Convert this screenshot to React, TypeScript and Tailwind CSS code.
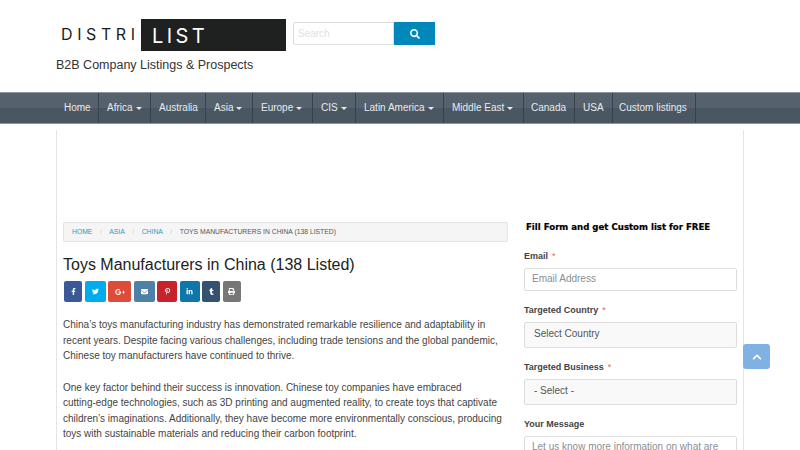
import React from "react";
import {
  FaChevronUp,
  FaEnvelope,
  FaFacebookF,
  FaGooglePlusG,
  FaLinkedinIn,
  FaPinterestP,
  FaPrint,
  FaSearch,
  FaTumblr,
  FaTwitter,
} from "react-icons/fa";

const navItems = [
  { label: "Home", w: "w-[43px] pl-[8px]" },
  { label: "Africa", caret: true, w: "w-[52px] pl-[8px]" },
  { label: "Australia", w: "w-[55px] pl-[8px]" },
  { label: "Asia", caret: true, w: "w-[47px] pl-[8px]" },
  { label: "Europe", caret: true, w: "w-[60px] pl-[8px]" },
  { label: "CIS", caret: true, w: "w-[43px] pl-[8px]" },
  { label: "Latin America", caret: true, w: "w-[88px] pl-[8px]" },
  { label: "Middle East", caret: true, w: "w-[80px] pl-[8px]" },
  { label: "Canada", w: "w-[51px] pl-[7px]" },
  { label: "USA", w: "w-[38px] pl-[8px]" },
  { label: "Custom listings", w: "w-[83px] pl-[6px]" },
];

const shareButtons = [
  { icon: <FaFacebookF />, cls: "w-[18px] bg-[#3b5998]" },
  { icon: <FaTwitter />, cls: "w-[21px] bg-[#00acee]" },
  { icon: <FaGooglePlusG className="text-[10px]" />, cls: "w-[23px] bg-[#dd4b39]" },
  { icon: <FaEnvelope />, cls: "w-[21px] bg-[#4e81a8]" },
  { icon: <FaPinterestP />, cls: "w-[20px] bg-[#c8232c]" },
  { icon: <FaLinkedinIn />, cls: "w-[20px] bg-[#0e76a8]" },
  { icon: <FaTumblr />, cls: "w-[18px] bg-[#34526f]" },
  { icon: <FaPrint />, cls: "w-[18px] bg-[#777777]" },
];

function Label({ text, required }: { text: string; required?: boolean }) {
  return (
    <div className="text-[9px] leading-[12px] font-bold text-[#444]">
      {text}
      {required && <span className="ml-[4px] font-normal text-[#f55]">*</span>}
    </div>
  );
}

export default function App() {
  return (
    <div className="relative h-[450px] w-[800px] overflow-hidden bg-white font-['Liberation_Sans',Arial,sans-serif]">
      {/* Header */}
      <header className="h-[92px] pl-[56px]">
        <div className="flex items-start pt-[19px]">
          <div className="ml-[5px] flex h-[32px] w-[225px] items-stretch">
            <div className="w-[80px] pt-[5px] font-['Inter',sans-serif] text-[16px] leading-[20px] tracking-[4.6px] text-[#1d1d1d]">
              DISTRI
            </div>
            <div className="w-[145px] bg-[#1e2120] pl-[11px] pt-[6px] font-['Inter',sans-serif] text-[20px] leading-[23px] tracking-[3.4px] text-white">
              LIST
            </div>
          </div>
          <div className="ml-[7px] mt-[3px] flex h-[23px]">
            <div className="w-[101px] rounded-l-[2px] border border-[#ddd] pl-[4px] text-[10px] leading-[21px] text-[#e2e2e2]">
              Search
            </div>
            <div className="flex w-[41px] items-center justify-center bg-[#0088bb] text-[10px] text-white">
              <FaSearch />
            </div>
          </div>
        </div>
        <div className="mt-[6px] text-[12.5px] leading-[16px] text-[#333]">
          B2B Company Listings &amp; Prospects
        </div>
      </header>

      {/* Navbar */}
      <nav className="flex h-[32px] border-y border-[#8b959d] bg-[linear-gradient(#55616d_0%,#55616d_50%,#4a5763_50%,#4a5763_100%)] pl-[56px]">
        {navItems.map((item) => (
          <div
            key={item.label}
            className={`flex items-center gap-[3px] border-r border-[#37424c] pb-[1px] text-[10px] text-[#e8ebee] ${item.w}`}
          >
            {item.label}
            {item.caret && (
              <span className="mt-[1px] h-0 w-0 border-x-[3px] border-t-[3px] border-x-transparent border-t-[#e8ebee]" />
            )}
          </div>
        ))}
      </nav>

      {/* Content */}
      <main className="mx-[56px] mt-[6px] flex h-[320px] border-x border-[#e4e4e4] pl-[6px] pt-[92px]">
        <section className="w-[445px]">
          <div className="flex h-[20px] items-center rounded-[2px] border border-[#e4e4e4] bg-[#f5f5f5] pl-[8px] text-[6.8px] uppercase">
            <span className="text-[#2a9ac4]">Home</span>
            <span className="mx-[7.5px] text-[#ccc]">/</span>
            <span className="text-[#2a9ac4]">Asia</span>
            <span className="mx-[7.5px] text-[#ccc]">/</span>
            <span className="text-[#2a9ac4]">China</span>
            <span className="mx-[7.5px] text-[#ccc]">/</span>
            <span className="text-[#555]">Toys Manufacturers in China (138 Listed)</span>
          </div>
          <h1 className="mt-[12px] text-[16px] leading-[21px] text-[#222]">
            Toys Manufacturers in China (138 Listed)
          </h1>
          <div className="ml-[1px] mt-[6px] flex h-[21px] gap-[2.5px]">
            {shareButtons.map((b, i) => (
              <div
                key={i}
                className={`flex items-center justify-center rounded-[2px] text-[7px] text-white ${b.cls}`}
              >
                {b.icon}
              </div>
            ))}
          </div>
          <div className="mt-[15px] text-[10px] leading-[15.5px] text-[#444]">
            <p>
              China’s toys manufacturing industry has demonstrated remarkable resilience and
              adaptability in recent years. Despite facing various challenges, including trade
              tensions and the global pandemic, Chinese toy manufacturers have continued to thrive.
            </p>
            <p className="mt-[16px]">
              One key factor behind their success is innovation. Chinese toy companies have embraced
              <br />
              cutting-edge technologies, such as 3D printing and augmented reality, to create toys
              that captivate children’s imaginations. Additionally, they have become more
              environmentally conscious, producing toys with sustainable materials and reducing
              their carbon footprint.
            </p>
          </div>
        </section>

        <aside className="ml-[16px] w-[213px]">
          <div className="ml-[2px] mt-[-1px] font-['DejaVu_Sans',sans-serif] text-[8.6px] font-bold leading-[12px] text-black [-webkit-text-stroke:0.2px_black]">
            Fill Form and get Custom list for FREE
          </div>
          <div className="mt-[17px]">
            <Label text="Email" required />
          </div>
          <div className="mt-[6px] h-[23px] rounded-[2px] border border-[#ddd] pl-[7px] text-[10px] leading-[19px] text-[#8a8f94]">
            Email Address
          </div>
          <div className="mt-[13px]">
            <Label text="Targeted Country" required />
          </div>
          <div className="mt-[6px] h-[26px] rounded-[2px] border border-[#ddd] bg-[#f9f9f9] pl-[9px] text-[10px] leading-[21px] text-[#555]">
            Select Country
          </div>
          <div className="mt-[13px]">
            <Label text="Targeted Business" required />
          </div>
          <div className="mt-[6px] h-[26px] rounded-[2px] border border-[#ddd] bg-[#f9f9f9] pl-[9px] text-[10px] leading-[21px] text-[#555]">
            - Select -
          </div>
          <div className="mt-[13px]">
            <Label text="Your Message" />
          </div>
          <div className="mt-[6px] h-[40px] rounded-[2px] border border-[#ddd] pl-[7px] text-[10px] leading-[19px] text-[#8a8f94]">
            Let us know more information on what are
          </div>
        </aside>
      </main>

      {/* Back to top */}
      <div className="absolute left-[743px] top-[344px] flex h-[25px] w-[27px] items-center justify-center rounded-[3px] bg-[#7fb2e2] text-[10px] text-white">
        <FaChevronUp />
      </div>
    </div>
  );
}
